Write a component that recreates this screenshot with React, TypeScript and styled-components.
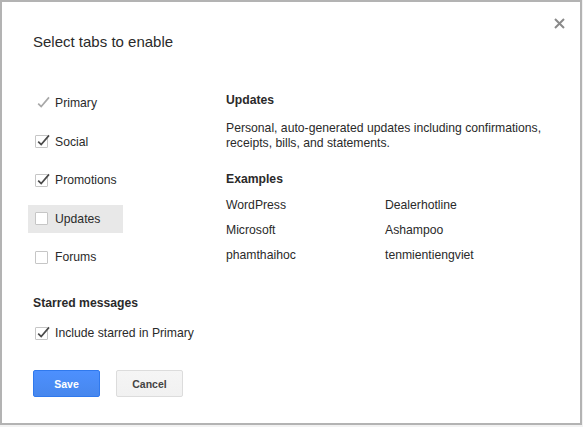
import { createGlobalStyle, styled } from "styled-components";

const GlobalStyle = createGlobalStyle`
    html, body {
        margin: 0;
        padding: 0;
        background-color: #f2f2f2;
    }
    body {
        font-family: "Liberation Sans", Arial, sans-serif;
        color: #222;
    }
`;

const Dialog = styled.div`
    position: relative;
    box-sizing: border-box;
    width: 582px;
    height: 425px;
    background-color: #fff;
    border: 2px solid #b3b3b3;
    padding: 30px 0 0 31px;
`;

const Close = styled.button`
    position: absolute;
    top: 13px;
    right: 13px;
    width: 16px;
    height: 16px;
    padding: 0;
    border: none;
    background: transparent;
    cursor: pointer;
    display: flex;
    align-items: center;
    justify-content: center;
`;

const Title = styled.h1`
    margin: 0;
    font-size: 15px;
    line-height: 20px;
    font-weight: normal;
    color: #2a2a2a;
`;

const Body = styled.div`
    display: flex;
    margin-top: 37px;
`;

const LeftCol = styled.div`
    width: 193px;
    flex-shrink: 0;
    display: flex;
    flex-direction: column;
`;

const TabList = styled.div`
    display: flex;
    flex-direction: column;
    gap: 10.6px;
`;

const Row = styled.label<{ $active?: boolean }>`
    display: flex;
    align-items: center;
    gap: 7px;
    width: 95px;
    height: 28px;
    margin-left: -5px;
    padding-left: 7px;
    box-sizing: border-box;
    font-size: 12.2px;
    color: #2a2a2a;
    background-color: ${(p) => (p.$active ? "#e8e8e8" : "transparent")};
    white-space: nowrap;
    cursor: pointer;
`;

const Box = styled.span<{ $disabled?: boolean }>`
    position: relative;
    width: 13px;
    height: 13px;
    box-sizing: border-box;
    flex-shrink: 0;
    border: 1px solid ${(p) => (p.$disabled ? "transparent" : "#c6c6c6")};
    border-radius: 1px;
    background-color: ${(p) => (p.$disabled ? "transparent" : "#fff")};
`;

const Tick = styled.svg`
    position: absolute;
    left: 0px;
    top: -3px;
    width: 15px;
    height: 15px;
    overflow: visible;
`;

const Heading = styled.h2<{ $top?: number }>`
    margin: ${(p) => p.$top ?? 0}px 0 0 0;
    font-size: 12.2px;
    line-height: 16px;
    font-weight: bold;
    color: #2a2a2a;
`;

const Buttons = styled.div`
    display: flex;
    gap: 16px;
    margin-top: 23px;
`;

const Button = styled.button<{ $primary?: boolean }>`
    width: 67px;
    height: 27px;
    box-sizing: border-box;
    border-radius: 2px;
    font-family: "Liberation Sans", Arial, sans-serif;
    font-size: 10.5px;
    font-weight: bold;
    padding: 0;
    cursor: pointer;
    color: ${(p) => (p.$primary ? "#fff" : "#444")};
    background: ${(p) =>
        p.$primary
            ? "linear-gradient(#4d90fe, #4787ed)"
            : "linear-gradient(#f5f5f5, #f1f1f1)"};
    border: 1px solid ${(p) => (p.$primary ? "#3079ed" : "#dcdcdc")};
`;

const RightCol = styled.div`
    flex: 1;
    padding-top: 3px;
`;

const Desc = styled.p`
    margin: 12.5px 0 0 0;
    font-size: 12.2px;
    line-height: 15px;
    color: #2a2a2a;
    max-width: 330px;
`;

const Examples = styled.div`
    display: grid;
    grid-template-columns: 159px 1fr;
    grid-auto-rows: 25px;
    margin-top: 5.5px;
    font-size: 12.2px;
    color: #2a2a2a;
    align-items: center;
`;

const CheckBox = ({ checked, disabled }: { checked?: boolean; disabled?: boolean }) => (
    <Box $disabled={disabled}>
        {checked && (
            <Tick viewBox="0 0 15 15">
                <path
                    d="M2.2 8.6 L5.2 11.6 L13 2.4"
                    fill="none"
                    stroke={disabled ? "#a8a8a8" : "#4a4a4a"}
                    strokeWidth="1.7"
                />
            </Tick>
        )}
    </Box>
);

const tabs = [
    { name: "Primary", checked: true, disabled: true },
    { name: "Social", checked: true },
    { name: "Promotions", checked: true },
    { name: "Updates", checked: false, active: true },
    { name: "Forums", checked: false },
];

const examples = [
    "WordPress",
    "Dealerhotline",
    "Microsoft",
    "Ashampoo",
    "phamthaihoc",
    "tenmientiengviet",
];

const App = () => {
    return (
        <>
            <GlobalStyle />
            <Dialog>
                <Close aria-label="Close">
                    <svg width="11" height="11" viewBox="0 0 11 11">
                        <path
                            d="M1 1 L10 10 M10 1 L1 10"
                            stroke="#8a8a8a"
                            strokeWidth="2"
                        />
                    </svg>
                </Close>
                <Title>Select tabs to enable</Title>
                <Body>
                    <LeftCol>
                        <TabList>
                            {tabs.map((tab) => (
                                <Row key={tab.name} $active={tab.active}>
                                    <CheckBox
                                        checked={tab.checked}
                                        disabled={tab.disabled}
                                    />
                                    {tab.name}
                                </Row>
                            ))}
                        </TabList>
                        <Heading $top={24}>Starred messages</Heading>
                        <TabList style={{ marginTop: 8 }}>
                            <Row style={{ width: "auto" }}>
                                <CheckBox checked />
                                Include starred in Primary
                            </Row>
                        </TabList>
                        <Buttons>
                            <Button $primary>Save</Button>
                            <Button>Cancel</Button>
                        </Buttons>
                    </LeftCol>
                    <RightCol>
                        <Heading>Updates</Heading>
                        <Desc>
                            Personal, auto-generated updates including
                            confirmations, receipts, bills, and statements.
                        </Desc>
                        <Heading $top={20.5}>Examples</Heading>
                        <Examples>
                            {examples.map((e) => (
                                <span key={e}>{e}</span>
                            ))}
                        </Examples>
                    </RightCol>
                </Body>
            </Dialog>
        </>
    );
};

export default App;
